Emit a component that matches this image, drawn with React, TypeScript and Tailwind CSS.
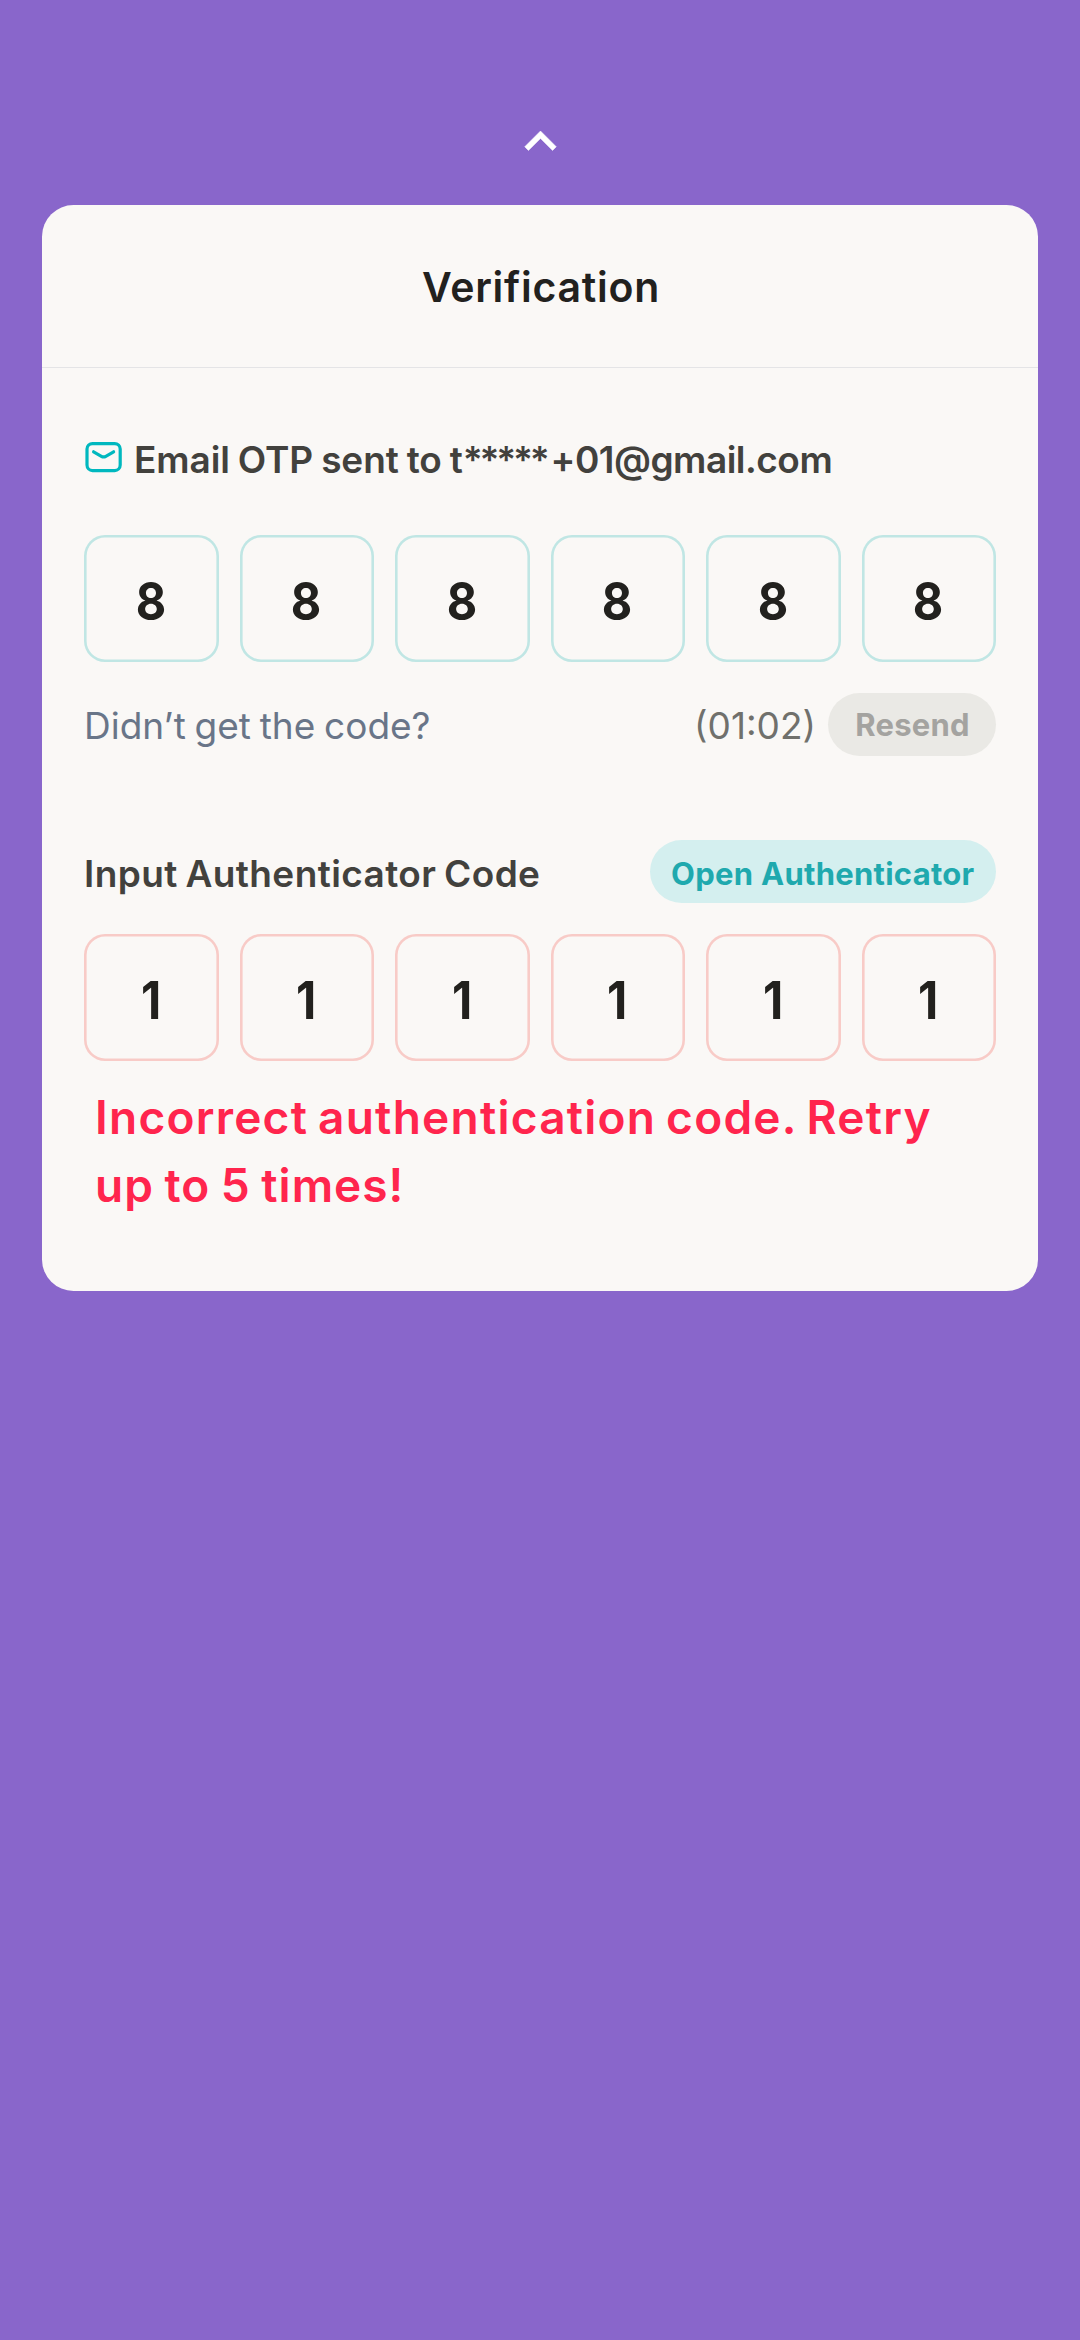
function ChevronUp() {
  return (
    <svg viewBox="0 0 24 24" className="size-[63px]" fill="#fff" stroke="#fff" strokeWidth="0.2" aria-hidden="true">
      <path d="M12 8l-6 6 1.41 1.41L12 10.83l4.59 4.58L18 14z" />
    </svg>
  );
}

function MailIcon() {
  return (
    <svg
      viewBox="0 0 38 32"
      className="mb-[7px] h-8 w-[38px] shrink-0"
      fill="none"
      stroke="#00b8bf"
      strokeWidth="3.2"
      strokeLinecap="round"
      strokeLinejoin="round"
      aria-hidden="true"
    >
      <rect x="3" y="2.6" width="33.2" height="27" rx="5.5" />
      <path d="M9.6 10.8l7.8 4.5c1.400.8 3 .8 4.400 0l7.800-4.500" />
    </svg>
  );
}

type Tone = "ok" | "error";

const toneClass: Record<Tone, string> = {
  ok: "shadow-[inset_0_0_0_2.6px_#c0e6e4]",
  error: "shadow-[inset_0_0_0_2.6px_#f8cbc7]",
};

function CodeInput({ code, tone }: { code: string; tone: Tone }) {
  return (
    <div className="grid h-[126.5px] grid-cols-6 gap-[21px]">
      {code.split("").map((digit, i) => (
        <div
          key={i}
          className={`flex items-center justify-center rounded-[21px] pt-[7px] pr-px text-[52px] leading-none font-bold text-[#22211e] ${toneClass[tone]}`}
        >
          <span className="inline-block scale-x-[0.9]">{digit}</span>
        </div>
      ))}
    </div>
  );
}

export default function App() {
  return (
    <div className="flex h-[2340px] w-[1080px] flex-col bg-[#8966cb] px-[42px] pt-[110px] font-['Inter','Noto_Sans',sans-serif] whitespace-nowrap">
      <div className="flex h-[94.5px] shrink-0 justify-center">
        <ChevronUp />
      </div>

      <section className="flex h-[1086.5px] w-[996px] shrink-0 flex-col overflow-hidden rounded-[31.5px] bg-[#faf8f6]">
        <header className="flex h-[163.5px] shrink-0 items-center justify-center border-b border-[#e4e4e6] pt-[3px] pl-[2px]">
          <h1 className="text-[41px] leading-none font-semibold tracking-[0.75px] text-[#22211e]">
            Verification
          </h1>
        </header>

        <div className="flex flex-col px-[42px]">
          <div className="mt-[71px] flex h-[42px] items-center">
            <MailIcon />
            <p className="ml-3 text-[37px] leading-[42px] font-semibold text-[#42413d]">
              <span className="tracking-[-0.1px] [word-spacing:-1.2px]">Email OTP sent to t</span>
              <span className="tracking-[-3.2px]">*****</span>
              <span className="ml-1 tracking-[-0.5px]">+01@gmail.com</span>
            </p>
          </div>

          <div className="mt-[54px]">
            <CodeInput code="888888" tone="ok" />
          </div>

          <div className="mt-[31.5px] flex h-[63px] items-center">
            <p className="pt-0.5 text-[37px] leading-[42px] text-[#697588] [word-spacing:-1.6px]">
              Didn’t get the code?
            </p>
            <span className="mr-3 ml-auto pt-0.5 text-[37px] leading-[42px] text-[#70706c]">(01:02)</span>
            <button className="flex h-[63px] w-[168px] items-center justify-center rounded-full bg-[#eae9e5] pl-px text-[31px] leading-none font-bold tracking-[0.2px] text-[#a4a3a0]">
              Resend
            </button>
          </div>

          <div className="mt-[84px] flex h-[63px] items-center justify-between">
            <p className="pt-1 text-[37px] leading-[42px] font-semibold tracking-[0.4px] text-[#42413d] [word-spacing:-2px]">
              Input Authenticator Code
            </p>
            <button className="flex h-[63px] w-[346.5px] items-center justify-center rounded-full bg-[#d4efef] pt-1 text-[31px] leading-none font-bold tracking-[0.27px] text-[#1fa9ae]">
              Open Authenticator
            </button>
          </div>

          <div className="mt-[31px]">
            <CodeInput code="111111" tone="error" />
          </div>

          <p className="mt-[22.5px] ml-[11px] text-[46px] leading-[68px] font-semibold text-[#ff254d]">
            <span className="tracking-[1.25px] [word-spacing:-3px]">Incorrect authentication code. Retry</span>
            <br />
            <span className="tracking-[1px] [word-spacing:-2px]">up to 5 times!</span>
          </p>
        </div>
      </section>
    </div>
  );
}
